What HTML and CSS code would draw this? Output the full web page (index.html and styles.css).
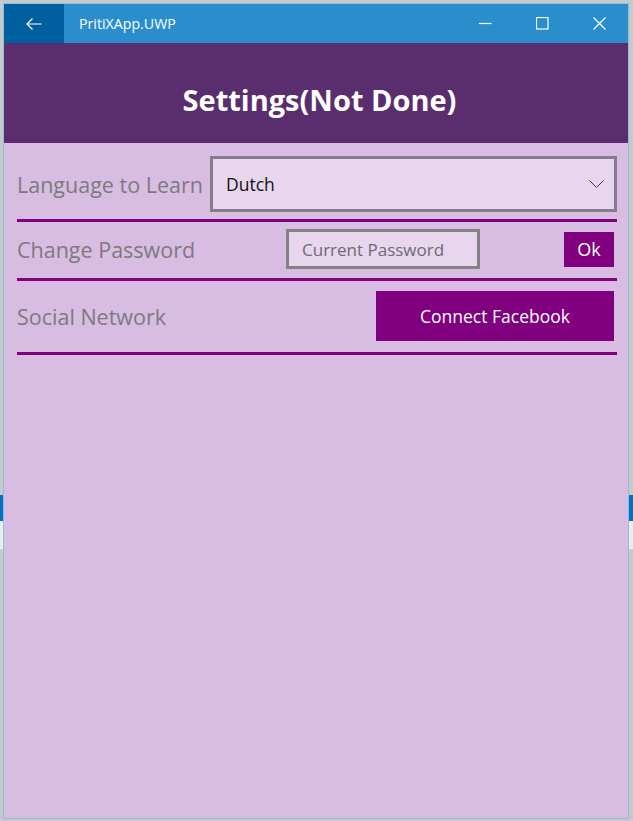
FILE: index.html
```html
<!DOCTYPE html>
<html lang="en">
<head>
<meta charset="utf-8">
<title>PritiXApp.UWP</title>
<link rel="stylesheet" href="styles.css">
</head>
<body>
<div class="window">
  <div class="titlebar">
    <div class="back-btn">
      <svg width="16" height="12" viewBox="0 0 16 12"><path d="M1 6 H15.5 M6.5 0.5 L1 6 L6.5 11.5" fill="none" stroke="#fff" stroke-width="1.2"/></svg>
    </div>
    <div class="app-title">PritiXApp.UWP</div>
    <div class="controls">
      <div class="ctrl"><svg width="13" height="13" viewBox="0 0 13 13"><path d="M0 6.5 H12.5" stroke="#fff" stroke-width="1.2"/></svg></div>
      <div class="ctrl"><svg width="13" height="13" viewBox="0 0 13 13"><rect x="0.5" y="0.5" width="11.5" height="11.5" fill="none" stroke="#fff" stroke-width="1.2"/></svg></div>
      <div class="ctrl"><svg width="13" height="13" viewBox="0 0 13 13"><path d="M0.5 0.5 L12.5 12.5 M12.5 0.5 L0.5 12.5" stroke="#fff" stroke-width="1.2"/></svg></div>
    </div>
  </div>
  <div class="header">
    <h1 class="page-title">Settings(Not Done)</h1>
  </div>
  <div class="content">
    <div class="row row-lang">
      <div class="label">Language to Learn</div>
      <div class="combo">
        <span class="combo-value">Dutch</span>
        <svg class="chev" width="15" height="8" viewBox="0 0 15 8"><path d="M0.5 0.5 L7.5 7.5 L14.5 0.5" fill="none" stroke="#3a3a3a" stroke-width="1"/></svg>
      </div>
    </div>
    <div class="row row-pass">
      <div class="label">Change Password</div>
      <div class="textbox">Current Password</div>
      <button class="btn btn-ok">Ok</button>
    </div>
    <div class="row row-social">
      <div class="label">Social Network</div>
      <button class="btn btn-fb">Connect Facebook</button>
    </div>
  </div>
</div>
</body>
</html>
```

FILE: styles.css
```css
* { box-sizing: border-box; }

html, body {
  margin: 0;
  padding: 0;
  width: 633px;
  height: 821px;
  overflow: hidden;
}

body {
  font-family: "Open Sans", "Noto Sans", sans-serif;
  background:
    linear-gradient(to bottom,
      transparent 0, transparent 495px,
      #0a6fc0 495px, #0a6fc0 521px,
      #ececec 521px, #ececec 549px,
      transparent 549px),
    #c9c9c9;
}

.window {
  margin: 3px 4px 0 3px;
  height: 816px;
  border: 1px solid #86c3e3;
  display: flex;
  flex-direction: column;
  background: #d8bce1;
}

.titlebar {
  height: 39px;
  background: #2a8ecd;
  display: flex;
  align-items: center;
  color: #fff;
  flex-shrink: 0;
}

.back-btn {
  width: 60px;
  height: 100%;
  background: #00609f;
  display: flex;
  align-items: center;
  justify-content: center;
}

.app-title {
  margin-left: 15px;
  font-size: 14.2px;
  flex: 1;
}

.controls {
  display: flex;
  height: 100%;
}

.ctrl {
  width: 57px;
  height: 100%;
  display: flex;
  align-items: center;
  justify-content: center;
}

.header {
  height: 100px;
  background: #5a2d6e;
  display: flex;
  justify-content: center;
  flex-shrink: 0;
  padding-left: 7px;
}

.page-title {
  margin: 0;
  padding-top: 40px;
  font-size: 29px;
  line-height: 34px;
  font-weight: 700;
  color: #fff;
}

.content {
  flex: 1;
  padding: 0 11px 0 13px;
}

.row {
  display: grid;
  align-items: center;
  border-bottom: 3px solid #800080;
}

.label {
  font-size: 21.5px;
  color: #7c7a7e;
  white-space: nowrap;
}

.row-lang {
  grid-template-columns: 193px 1fr;
  padding: 13px 0 7px;
}

.combo {
  height: 56px;
  border: 3px solid #857b8b;
  background: #e8d6ee;
  display: flex;
  align-items: center;
  justify-content: space-between;
  padding: 0 10px 0 13px;
}

.combo-value {
  font-size: 17.5px;
  color: #111;
}

.row-pass {
  grid-template-columns: 269px 194px 1fr;
  padding: 7px 0 9px;
}

.textbox {
  height: 40px;
  border: 3px solid #828282;
  background: #e8d6ee;
  color: #6e6a70;
  font-size: 17px;
  display: flex;
  align-items: center;
  padding-left: 13px;
  white-space: nowrap;
}

.btn {
  font-family: inherit;
  border: none;
  background: #800080;
  color: #fff;
  padding: 0;
  justify-self: end;
  margin-right: 3px;
}

.btn-ok {
  width: 50px;
  height: 35px;
  font-size: 18px;
}

.row-social {
  grid-template-columns: 1fr auto;
  padding: 10px 0 11px;
}

.btn-fb {
  width: 238px;
  height: 50px;
  font-size: 17.5px;
}
```
